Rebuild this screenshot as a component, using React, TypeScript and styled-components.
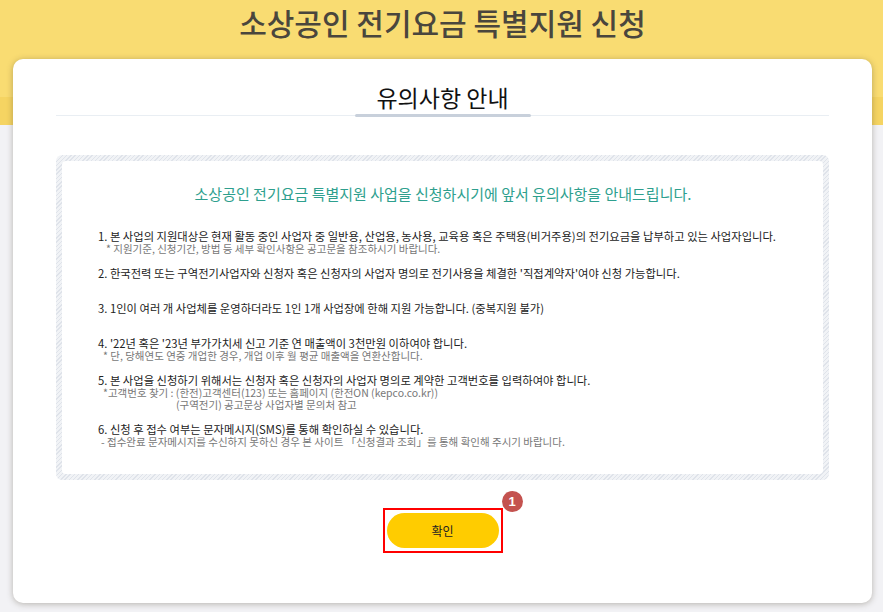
import React from 'react';
import styled, { createGlobalStyle } from 'styled-components';

const GlobalStyle = createGlobalStyle`
  html, body {
    margin: 0;
    padding: 0;
  }
  body {
    width: 883px;
    height: 612px;
    overflow: hidden;
    font-family: 'Noto Sans CJK KR', 'Noto Sans', sans-serif;
    background: linear-gradient(
      to bottom,
      #f9dc72 0,
      #f9dc72 97px,
      #f5d462 97px,
      #f5d462 125px,
      #f2f2f5 125px
    );
  }
`;

const Page = styled.div`
  display: flex;
  flex-direction: column;
  padding: 0 11px 0 13px;
`;

const Header = styled.header`
  height: 59px;
  display: flex;
  justify-content: center;
`;

const PageTitle = styled.h1`
  margin: 0;
  font-size: 30px;
  line-height: 44px;
  font-weight: 500;
  color: #4a463d;
`;

const Card = styled.section`
  background: #fff;
  border-radius: 10px;
  box-shadow: 0 1px 6px rgba(70, 60, 40, 0.35);
  padding: 0 43px 50px;
  display: flex;
  flex-direction: column;
  align-items: stretch;
`;

const TabBar = styled.div`
  display: flex;
  justify-content: center;
  padding-top: 23px;
  border-bottom: 1px solid #e9eef3;
`;

const Tab = styled.h2`
  position: relative;
  margin: 0;
  padding-bottom: 3px;
  font-size: 23px;
  line-height: 30px;
  font-weight: 400;
  color: #111;

  &::after {
    content: '';
    position: absolute;
    left: 50%;
    bottom: -2px;
    width: 176px;
    height: 3px;
    border-radius: 2px;
    transform: translateX(-50%);
    background: #c8d0db;
  }
`;

const NoticeFrame = styled.div`
  margin-top: 39px;
  padding: 6px;
  border-radius: 6px;
  background: repeating-linear-gradient(
    -45deg,
    #dfe3ea 0,
    #dfe3ea 1px,
    #f1f3f6 1px,
    #f1f3f6 3px
  );
`;

const NoticeBody = styled.div`
  background: #fff;
  border-radius: 4px;
  padding: 24px 35px 26px 36px;
`;

const Lead = styled.p`
  margin: 0 0 26px;
  text-align: center;
  font-size: 15px;
  line-height: 18px;
  color: #2e9f8e;
`;

const List = styled.ol`
  list-style: none;
  margin: 0;
  padding: 0;
  display: flex;
  flex-direction: column;
  gap: 11px;
`;

const Item = styled.li`
  min-height: 24px;
`;

const Main = styled.div`
  font-size: 11.3px;
  line-height: 14px;
  color: #222;
  white-space: nowrap;
`;

const Note = styled.div<{ $indent: number }>`
  padding-left: ${(p) => p.$indent}px;
  font-size: 10.5px;
  line-height: 12px;
  color: #777;
  white-space: nowrap;
`;

const Actions = styled.div`
  margin-top: 28px;
  display: flex;
  justify-content: center;
`;

const Highlight = styled.div`
  position: relative;
  border: 2px solid #ff0000;
  padding: 3px 2px;
`;

const ConfirmButton = styled.button`
  display: block;
  width: 112px;
  height: 35px;
  border: none;
  border-radius: 18px;
  background: #ffcc00;
  font-family: 'Noto Sans CJK KR', sans-serif;
  font-size: 12px;
  color: #222;
  cursor: pointer;
`;

const Badge = styled.span`
  position: absolute;
  top: -19px;
  right: -22px;
  width: 21px;
  height: 21px;
  border-radius: 50%;
  background: #c4524f;
  color: #fff;
  font-family: 'Liberation Sans', sans-serif;
  font-weight: 700;
  font-size: 13px;
  line-height: 21px;
  text-align: center;
`;

type Notice = {
  text: string;
  notes: { text: string; indent: number }[];
};

const items: Notice[] = [
  {
    text: '1. 본 사업의 지원대상은 현재 활동 중인 사업자 중 일반용, 산업용, 농사용, 교육용 혹은 주택용(비거주용)의 전기요금을 납부하고 있는 사업자입니다.',
    notes: [{ text: '* 지원기준, 신청기간, 방법 등 세부 확인사항은 공고문을 참조하시기 바랍니다.', indent: 8 }],
  },
  {
    text: "2. 한국전력 또는 구역전기사업자와 신청자 혹은 신청자의 사업자 명의로 전기사용을 체결한 '직접계약자'여야 신청 가능합니다.",
    notes: [],
  },
  {
    text: '3. 1인이 여러 개 사업체를 운영하더라도 1인 1개 사업장에 한해 지원 가능합니다. (중복지원 불가)',
    notes: [],
  },
  {
    text: "4. '22년 혹은 '23년 부가가치세 신고 기준 연 매출액이 3천만원 이하여야 합니다.",
    notes: [{ text: '* 단, 당해연도 연중 개업한 경우, 개업 이후 월 평균 매출액을 연환산합니다.', indent: 5 }],
  },
  {
    text: '5. 본 사업을 신청하기 위해서는 신청자 혹은 신청자의 사업자 명의로 계약한 고객번호를 입력하여야 합니다.',
    notes: [
      { text: '*고객번호 찾기 : (한전)고객센터(123) 또는 홈페이지 (한전ON (kepco.co.kr))', indent: 5 },
      { text: '(구역전기) 공고문상 사업자별 문의처 참고', indent: 78 },
    ],
  },
  {
    text: '6. 신청 후 접수 여부는 문자메시지(SMS)를 통해 확인하실 수 있습니다.',
    notes: [
      {
        text: '- 접수완료 문자메시지를 수신하지 못하신 경우 본 사이트 「신청결과 조회」를 통해 확인해 주시기 바랍니다.',
        indent: 3,
      },
    ],
  },
];

export default function App() {
  return (
    <>
      <GlobalStyle />
      <Page>
        <Header>
          <PageTitle>소상공인 전기요금 특별지원 신청</PageTitle>
        </Header>
        <Card>
          <TabBar>
            <Tab>유의사항 안내</Tab>
          </TabBar>
          <NoticeFrame>
            <NoticeBody>
              <Lead>소상공인 전기요금 특별지원 사업을 신청하시기에 앞서 유의사항을 안내드립니다.</Lead>
              <List>
                {items.map((it) => (
                  <Item key={it.text}>
                    <Main>{it.text}</Main>
                    {it.notes.map((n) => (
                      <Note key={n.text} $indent={n.indent}>
                        {n.text}
                      </Note>
                    ))}
                  </Item>
                ))}
              </List>
            </NoticeBody>
          </NoticeFrame>
          <Actions>
            <Highlight>
              <ConfirmButton type="button">확인</ConfirmButton>
              <Badge>1</Badge>
            </Highlight>
          </Actions>
        </Card>
      </Page>
    </>
  );
}
